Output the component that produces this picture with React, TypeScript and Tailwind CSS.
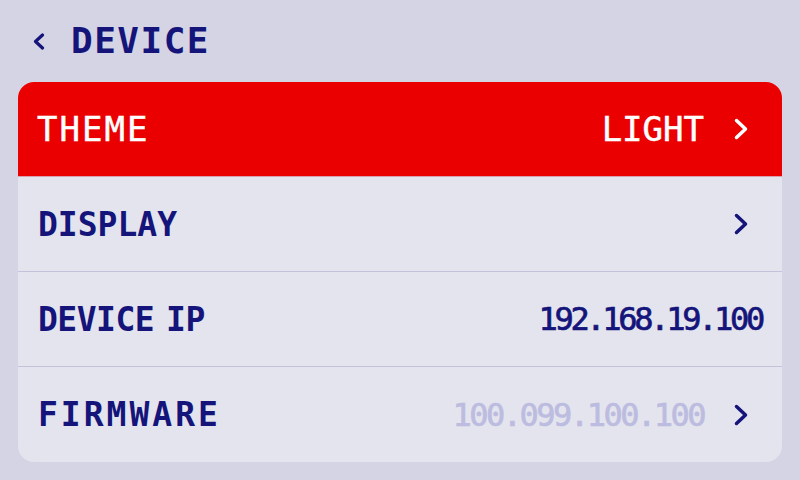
import React from "react";

const Chevron = ({ color }: { color: string }) => (
  <svg width="14" height="22" viewBox="0 0 14 22" className="shrink-0 ml-[30px] mr-[34px]">
    <polyline points="2.5,2.5 11.5,11 2.5,19.5" fill="none" stroke={color} strokeWidth="3.5" strokeLinecap="round" strokeLinejoin="round" />
  </svg>
);

export default function App() {
  const font = { fontFamily: '"DejaVu Sans Mono", monospace' };
  return (
    <div className="w-[800px] h-[480px] bg-[#d4d4e4] overflow-hidden" style={font}>
      <div className="h-[82px] flex items-center pl-[33px]">
        <svg width="12" height="17" viewBox="0 0 12 17" className="shrink-0">
          <polyline points="9.5,2 2.5,8.5 9.5,15" fill="none" stroke="#14147a" strokeWidth="3.2" strokeLinecap="round" strokeLinejoin="round" />
        </svg>
        <span className="ml-[26px] text-[36px] leading-none font-bold text-[#14147a] tracking-[1.5px]">DEVICE</span>
      </div>
      <div className="mx-[18px] rounded-2xl bg-[#e4e4ee] overflow-hidden">
        <div className="h-[95px] flex items-center pl-[19px] bg-[#ea0000] border-b border-[#d9a0b0]">
          <span className="text-[34px] leading-none text-white tracking-[2px] [-webkit-text-stroke:0.5px_currentColor]">THEME</span>
          <span className="ml-auto text-[34px] leading-none text-white [-webkit-text-stroke:0.5px_currentColor]">LIGHT</span>
          <Chevron color="#ffffff" />
        </div>
        <div className="h-[95px] flex items-center pl-[20px] border-b border-[#c2c2da]">
          <span className="text-[33px] leading-none font-bold text-[#14147a]">DISPLAY</span>
          <span className="ml-auto" />
          <Chevron color="#14147a" />
        </div>
        <div className="h-[95px] flex items-center pl-[20px] pr-[20px] border-b border-[#c2c2da]">
          <span className="text-[33px] leading-none font-bold text-[#14147a] tracking-[-0.5px]">DEVICE<span className="tracking-[-8px]"> </span>IP</span>
          <span className="ml-auto text-[32px] leading-none text-[#14147a] tracking-[-3.3px] [-webkit-text-stroke:0.7px_currentColor]">192.168.19.100</span>
        </div>
        <div className="h-[95px] flex items-center pl-[20px]">
          <span className="text-[33px] leading-none font-bold text-[#14147a] tracking-[3px]">FIRMWARE</span>
          <span className="ml-auto text-[32px] leading-none text-[#bcbce0] tracking-[-2.5px] [-webkit-text-stroke:0.7px_currentColor]">100.099.100.100</span>
          <Chevron color="#14147a" />
        </div>
      </div>
    </div>
  );
}
